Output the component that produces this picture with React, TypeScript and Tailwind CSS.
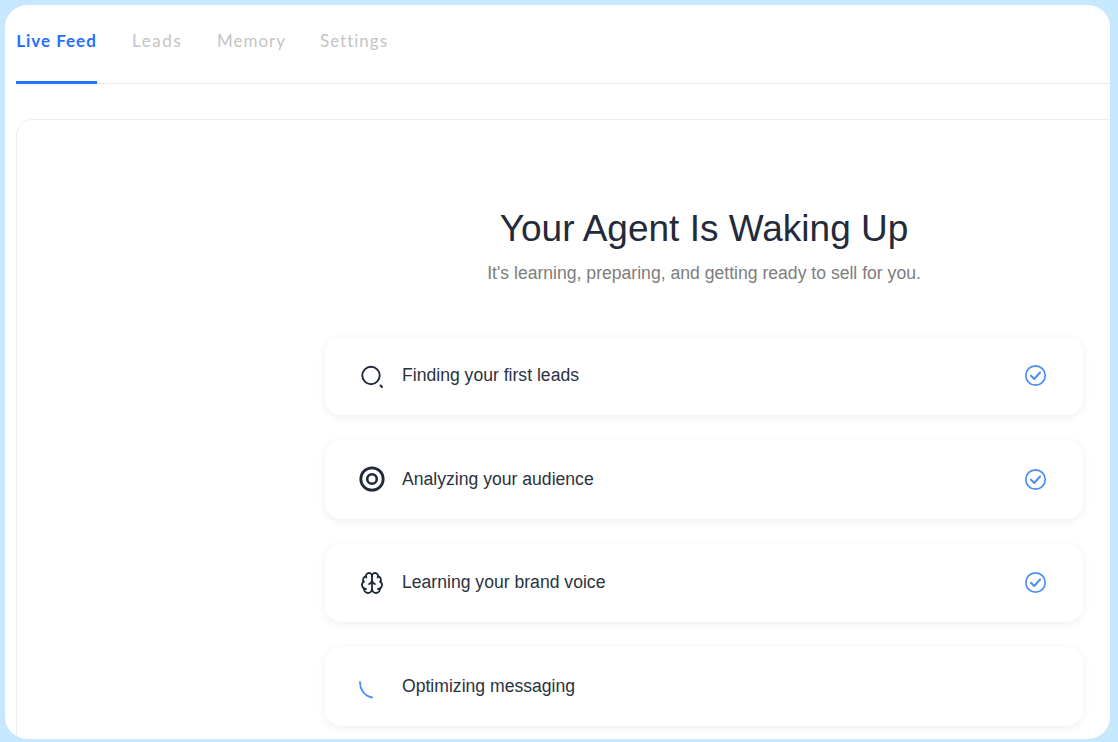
import { Brain } from "lucide-react";
import type { ReactNode } from "react";

const tabs = [
  { label: "Leads", cls: "w-[50px] tracking-[1.6px]" },
  { label: "Memory", cls: "w-[68px]" },
  { label: "Settings", cls: "w-[67px]" },
];

function SearchIcon() {
  return (
    <svg width="26" height="26" viewBox="0 0 26 26" fill="none" stroke="#1f2937" strokeLinecap="round">
      <circle cx="12" cy="12.5" r="8.7" strokeWidth="1.9" />
      <path d="M21.5 22.5L23 24" strokeWidth="2" />
    </svg>
  );
}

function TargetIcon() {
  return (
    <svg width="26" height="26" viewBox="0 0 26 26" fill="none" stroke="#1f2937">
      <circle cx="13" cy="13" r="11.2" strokeWidth="2.8" />
      <circle cx="13" cy="13" r="4.8" strokeWidth="2.6" />
    </svg>
  );
}

function SpinnerArc() {
  return (
    <svg width="26" height="26" viewBox="0 0 26 26" fill="none">
      <path d="M1 9C0.8 16 5 23 13 24.5" stroke="#4d8df6" strokeWidth="1.8" strokeLinecap="round" />
    </svg>
  );
}

function CheckIcon() {
  return (
    <svg width="23" height="23" viewBox="0 0 23 23" fill="none" stroke="#4d8df6" strokeLinecap="round" strokeLinejoin="round">
      <circle cx="11.5" cy="11.5" r="9.7" strokeWidth="1.7" />
      <path d="M7 11.8L10.2 15L16 8.5" strokeWidth="2" />
    </svg>
  );
}

function StepRow({ icon, label, done }: { icon: ReactNode; label: string; done?: boolean }) {
  return (
    <div className="flex h-[78.5px] w-[758px] shrink-0 items-center rounded-2xl bg-white pl-[34px] pr-[36px] shadow-[0_2px_10px_rgba(0,0,0,0.07)]">
      <div className="flex w-[26px] items-center justify-center">{icon}</div>
      <span className="ml-[17px] flex-1 pb-[1px] text-[17.6px] text-[#2b3240]">{label}</span>
      {done && <CheckIcon />}
    </div>
  );
}

export default function App() {
  return (
    <div className="h-[742px] w-[1118px] overflow-hidden bg-[#c6e8ff] pb-[3px] pl-[5px] pr-[8px] pt-[5px] font-['Liberation_Sans',sans-serif]">
      <div className="flex h-full flex-col overflow-hidden rounded-[22px] bg-white">
        {/* Tabs */}
        <div className="ml-[11px] flex h-[79px] shrink-0 items-start border-b border-[#ebebeb] font-['Lato',sans-serif] text-[17px] tracking-[1px]">
          <div className="-mb-px flex h-[79px] w-[81px] justify-center whitespace-nowrap border-b-[3px] border-[#2670ff] pt-[23px] font-bold text-[#2670ff]">
            Live Feed
          </div>
          <div className="ml-[35px] flex gap-[35px] pt-[23px] text-[#c4c4c4]">
            {tabs.map((t) => (
              <span key={t.label} className={t.cls}>
                {t.label}
              </span>
            ))}
          </div>
        </div>

        {/* Main panel */}
        <div className="flex-1 overflow-hidden pl-[11px] pt-[35px]">
          <div className="flex h-[640px] w-[1376px] flex-col items-center rounded-2xl border border-[#eeeeee] pt-[87px]">
            <h1 className="text-[37px] leading-[44px] text-[#232a3b]">Your Agent Is Waking Up</h1>
            <p className="mt-[10px] text-[17.6px] leading-6 text-[#7d7d7d]">
              It's learning, preparing, and getting ready to sell for you.
            </p>
            <div className="mt-[51.5px] flex flex-col gap-[25px]">
              <StepRow icon={<SearchIcon />} label="Finding your first leads" done />
              <StepRow icon={<TargetIcon />} label="Analyzing your audience" done />
              <StepRow
                icon={<Brain size={24} strokeWidth={1.8} color="#1f2937" />}
                label="Learning your brand voice"
                done
              />
              <StepRow icon={<SpinnerArc />} label="Optimizing messaging" />
            </div>
          </div>
        </div>
      </div>
    </div>
  );
}
